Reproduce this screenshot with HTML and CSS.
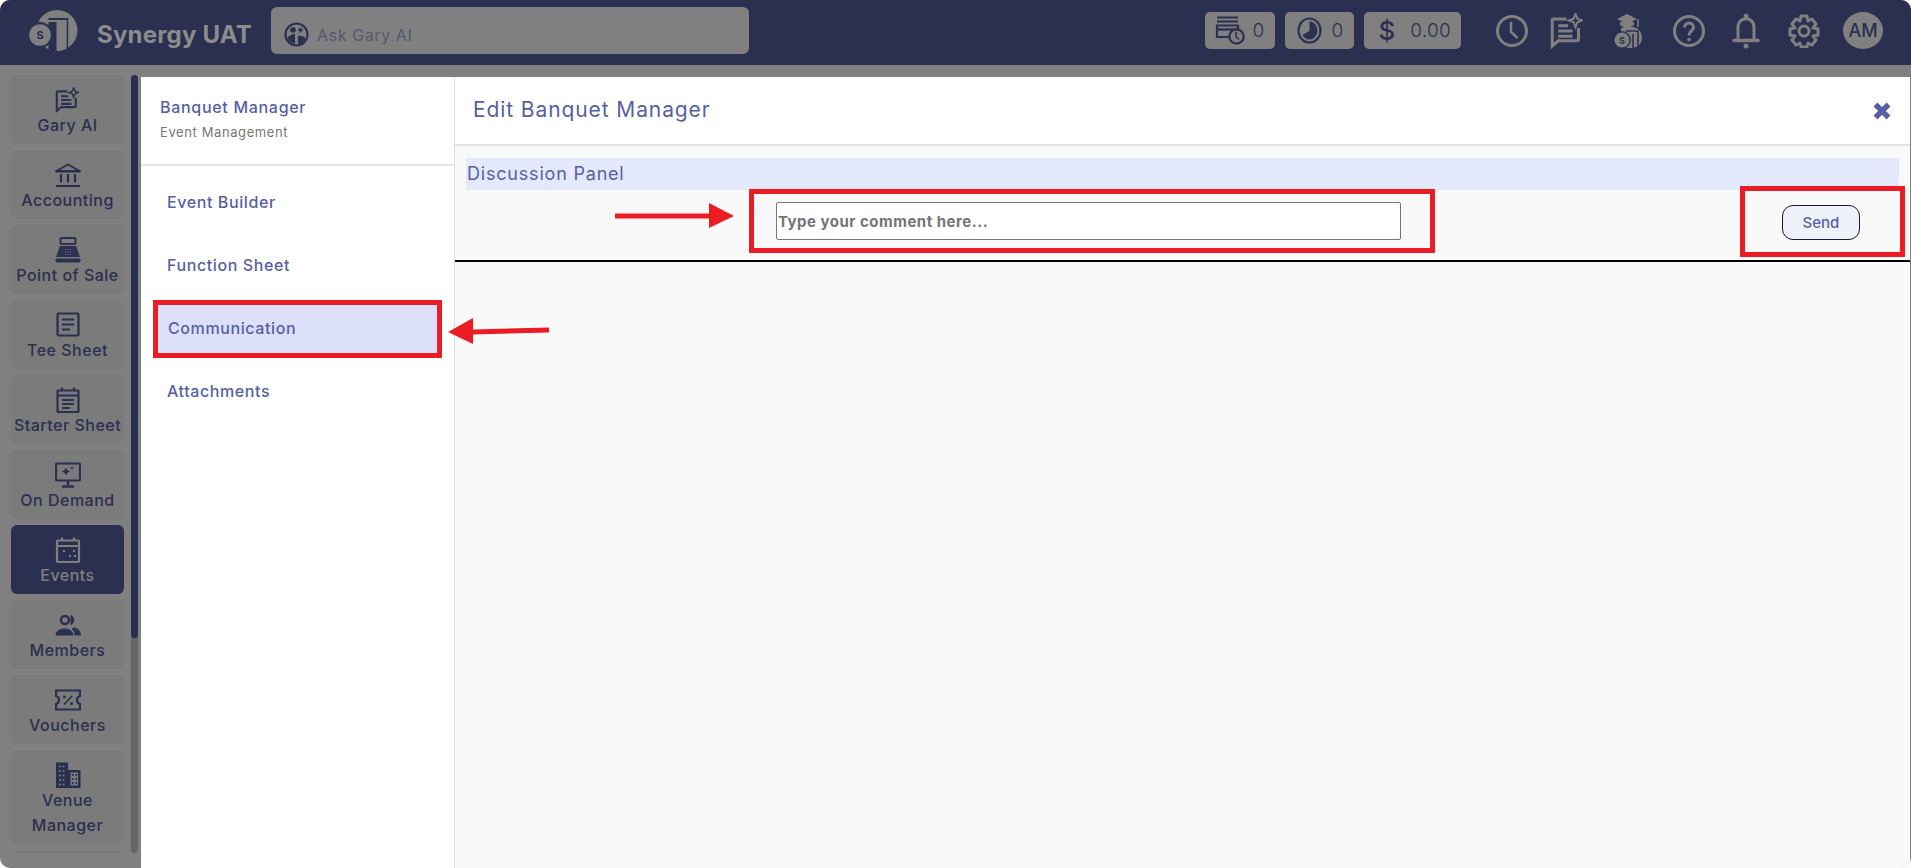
FILE: index.html
```html
<!DOCTYPE html>
<html lang="en">
<head>
    <meta charset="UTF-8">
    <title>Synergy UAT - Edit Banquet Manager</title>
    <link rel="stylesheet" href="styles.css">
</head>
<body>

<svg class="sprites" width="0" height="0">
    <symbol id="i-gary" viewBox="0 0 24 24">
        <path d="M13 4H4.500A1 1 0 0 0 3.500 5v17l4-3.500H20a1 1 0 0 0 1-1V10" fill="none" stroke="currentColor" stroke-width="2"/>
        <path d="M7.500 8.500H14M7.500 12H17M7.500 15.500H17" fill="none" stroke="currentColor" stroke-width="2"/>
        <path d="M19 0.500l1.200 3.300 3.300 1.200-3.300 1.200L19 9.500l-1.200-3.300-3.300-1.200 3.300-1.200z" fill="none" stroke="currentColor" stroke-width="1.300"/>
    </symbol>
</svg>

<div class="app">

    <!-- Top bar -->
    <header class="topbar">
        <svg class="logo" width="50" height="43" viewBox="0 0 50 43">
            <circle cx="29" cy="21.500" r="20.500" fill="#808080"/>
            <path d="M20 9H40.200V43H38.700V11H21z" fill="#2b2f50"/>
            <rect x="20.500" y="13" width="8" height="30" fill="#2b2f50"/>
            <circle cx="12" cy="26" r="13" fill="#2b2f50"/>
            <circle cx="12" cy="26" r="10.800" fill="#808080"/>
            <text x="12" y="30" class="logo-s">S</text>
        </svg>
        <span class="brand">Synergy UAT</span>
        <div class="search">
            <svg width="25" height="25" viewBox="0 0 25 25" fill="none" stroke="#2b2f50" stroke-width="2.200">
                <circle cx="12.500" cy="12.500" r="11"/>
                <circle cx="9" cy="8" r="2.800" fill="#2b2f50" stroke="none"/>
                <path d="M3.500 16.500c1-3 4-4.500 7.500-4.500v10c-3-.5-6-2.500-7.500-5.500z" fill="#2b2f50" stroke="none"/>
                <path d="M14 14c3-.5 6 .5 7.500 2.500-1 3-4 5.500-7.500 6z" fill="#2b2f50" stroke="none"/>
                <path d="M16.500 5.500v5M14 8h5" stroke-width="1.600"/>
            </svg>
            <span class="search-text">Ask Gary AI</span>
        </div>

        <div class="top-right">
            <div class="chip chip-one">
                <svg width="30" height="29" viewBox="0 0 30 29" fill="none" stroke="#2b2f50" stroke-width="2.200">
                    <path d="M2 1.500H23M2 5.500H23"/>
                    <path d="M14 21H2V9.500H23V13"/>
                    <path d="M2 13.500H23"/>
                    <circle cx="21.500" cy="20.500" r="7.200"/>
                    <path d="M21 16v5l3 2.500" stroke-width="1.600"/>
                </svg>
                <span>0</span>
            </div>
            <div class="chip chip-two">
                <svg width="25" height="27" viewBox="0 0 25 27" fill="none" stroke="#2b2f50" stroke-width="2.200">
                    <ellipse cx="12.500" cy="13.500" rx="11" ry="12"/>
                    <path d="M12.500 4.500a8 9 0 1 1-7 13.500l7-4z" fill="#2b2f50" stroke="none"/>
                </svg>
                <span>0</span>
            </div>
            <div class="chip chip-three">
                <span class="dollar">$</span>
                <span class="amount">0.00</span>
            </div>

            <div class="top-icons">
                <svg width="32" height="32" viewBox="0 0 32 32" fill="none" stroke="#808080" stroke-width="3">
                    <circle cx="16" cy="16" r="14.500"/>
                    <path d="M15 7v10l6.500 6" stroke-width="2.500"/>
                </svg>
                <svg class="top-gary" width="36" height="36"><use href="#i-gary"/></svg>
                <svg class="top-hat" width="32" height="36" viewBox="0 0 32 36" fill="none">
                    <path d="M15 1l10 5-10 5-10-5z" fill="#808080"/>
                    <path d="M8 9v3c4 3 10 3 14 0V9" fill="#808080"/>
                    <path d="M26 6v8" stroke="#808080" stroke-width="1.500"/>
                    <path d="M9 15c8-3 20-2 21 9 0 6-3 10-10 11H9z" fill="#808080"/>
                    <path d="M14 18H26V35M21 21V35" stroke="#2b2f50" stroke-width="1.600"/>
                    <circle cx="10" cy="27" r="9" fill="#2b2f50"/>
                    <circle cx="10" cy="27" r="7.500" fill="#808080"/>
                    <text x="10" y="30.500" class="hat-s">S</text>
                </svg>
                <svg class="top-help" width="32" height="32" viewBox="0 0 32 32" fill="none" stroke="#808080" stroke-width="3">
                    <circle cx="16" cy="16" r="14.500"/>
                    <path d="M11.500 12.500c0-6 9-6 9 0 0 3.500-4.500 3.500-4.500 8" />
                    <circle cx="16" cy="24.500" r="1.800" fill="#808080" stroke="none"/>
                </svg>
                <svg width="32" height="36" viewBox="0 0 32 36" fill="none" stroke="#808080" stroke-width="3">
                    <path d="M8 26V14c0-11 16-11 16 0v12"/>
                    <path d="M4 27.500H28" stroke-width="3.500" stroke-linecap="round"/>
                    <circle cx="16" cy="3" r="2.500" fill="#808080" stroke="none"/>
                    <circle cx="16" cy="33" r="2.500" fill="#808080" stroke="none"/>
                </svg>
                <svg width="32" height="34" viewBox="0 0 32 34" fill="none" stroke="#808080" stroke-width="3">
                    <path d="M13 2h6l1 5 4-2 4 5-3 4 5 1v6l-5 1 3 4-4 5-4-2-1 4h-6l-1-4-4 2-4-5 3-4-5-1v-6l5-1-3-4 4-5 4 2z" stroke-linejoin="round"/>
                    <circle cx="16" cy="17" r="5"/>
                </svg>
            </div>
            <div class="avatar">AM</div>
        </div>
    </header>

    <div class="main">

        <!-- Left navigation -->
        <aside class="sidebar">
            <nav class="side-list">
                <a class="side-item">
                    <svg class="side-gary" width="26" height="26"><use href="#i-gary"/></svg>
                    <span>Gary AI</span>
                </a>
                <a class="side-item">
                    <svg width="26" height="26" viewBox="0 0 26 26" fill="none" stroke="currentColor" stroke-width="2.200">
                        <path d="M1.500 9L13 2.500 24.500 9z" stroke-width="1.800"/>
                        <path d="M1 9.500H25M6 12v8.500M13 12v8.500M20 12v8.500M1 24H25"/>
                    </svg>
                    <span>Accounting</span>
                </a>
                <a class="side-item">
                    <svg width="26" height="26" viewBox="0 0 26 26" fill="none">
                        <rect x="5.500" y="1" width="15" height="6" rx="1.500" stroke="currentColor" stroke-width="2"/>
                        <path d="M5 9H21L25 20H1z" fill="currentColor"/>
                        <rect x="0.500" y="21.500" width="25" height="4" rx="1.500" fill="currentColor"/>
                        <path d="M10 12.500h7M10 15h7M10 17.500h7" stroke="#7b7b7b" stroke-width="1.200" stroke-dasharray="1.200 1.200"/>
                    </svg>
                    <span>Point of Sale</span>
                </a>
                <a class="side-item">
                    <svg width="26" height="26" viewBox="0 0 26 26" fill="none" stroke="currentColor" stroke-width="2.200">
                        <rect x="2.500" y="1.500" width="21" height="22" rx="1"/>
                        <path d="M7 7.500H19M7 12.500H19M7 17.500H15"/>
                    </svg>
                    <span>Tee Sheet</span>
                </a>
                <a class="side-item">
                    <svg width="26" height="26" viewBox="0 0 26 26" fill="none" stroke="currentColor" stroke-width="2.200">
                        <rect x="2.500" y="3.500" width="21" height="21.500" rx="1"/>
                        <path d="M7 0.500V4M19 0.500V4M2.500 8.500H23.500M7 13H19M7 17H19M7 21H15"/>
                    </svg>
                    <span>Starter Sheet</span>
                </a>
                <a class="side-item">
                    <svg width="26" height="26" viewBox="0 0 26 26" fill="none" stroke="currentColor" stroke-width="2.200">
                        <rect x="1" y="1.500" width="24" height="17" rx="1"/>
                        <path d="M13 19v4M7 24.500H19" stroke-width="2.600"/>
                        <path d="M11 6l1 2.500 2.500 1-2.500 1-1 2.500-1-2.500-2.500-1 2.500-1zM17 4.500v3M15.500 6h3" fill="currentColor" stroke="currentColor" stroke-width="0.800"/>
                    </svg>
                    <span>On Demand</span>
                </a>
                <a class="side-item side-item-active">
                    <svg width="26" height="26" viewBox="0 0 26 26" fill="none" stroke="currentColor" stroke-width="2.200">
                        <rect x="2" y="3.500" width="22" height="21.500" rx="1"/>
                        <path d="M7 0.500V4M19 0.500V4M2 9H24"/>
                        <path d="M8 14h2M14 19h2M19 19h2M18 14h2" stroke-width="2"/>
                    </svg>
                    <span>Events</span>
                </a>
                <a class="side-item">
                    <svg width="26" height="26" viewBox="0 0 26 26" fill="none" stroke="currentColor">
                        <circle cx="10" cy="8" r="4" stroke-width="2.400"/>
                        <path d="M16 3.500a5 5 0 0 1 0 9z" fill="currentColor"/>
                        <path d="M1 23c0-8 17-8 17 0z" fill="currentColor"/>
                        <path d="M19 16c3 0 6 2 6.500 7H20c0-3-1-5-3-6z" fill="currentColor"/>
                    </svg>
                    <span>Members</span>
                </a>
                <a class="side-item">
                    <svg width="26" height="26" viewBox="0 0 26 26" fill="none" stroke="currentColor" stroke-width="2.200">
                        <path d="M1 3.500H25V9c-4 1-4 7 0 8v5.500H1V17c4-1 4-7 0-8z"/>
                        <path d="M9 17.500L17 9" stroke-width="1.800"/>
                        <circle cx="9.500" cy="10" r="1.500" fill="currentColor" stroke="none"/>
                        <circle cx="16.500" cy="16.500" r="1.500" fill="currentColor" stroke="none"/>
                    </svg>
                    <span>Vouchers</span>
                </a>
                <a class="side-item side-item-tall">
                    <svg width="26" height="26" viewBox="0 0 26 26" fill="none">
                        <path d="M1 0.500H13V8H25.500V26H1z" fill="currentColor"/>
                        <path d="M15.500 10.500H23V23.500H15.500z" fill="#7b7b7b"/>
                        <path d="M17 13h1.500M20.500 13H22M17 17h1.500M20.500 17H22M17 21h1.500M20.500 21H22" stroke="currentColor" stroke-width="2"/>
                        <path d="M4 4.500h7M4 9h7M4 13.500h7M4 18h7M4 22.500h7" stroke="#7b7b7b" stroke-width="1.300" stroke-dasharray="2 1.500"/>
                    </svg>
                    <span>Venue Manager</span>
                </a>
                <a class="side-item"></a>
            </nav>
            <div class="side-track"><div class="side-thumb"></div></div>
        </aside>

        <!-- Edit dialog -->
        <section class="dialog">
            <div class="dialog-nav">
                <div class="dialog-nav-head">
                    <div class="nav-title">Banquet Manager</div>
                    <div class="nav-sub">Event Management</div>
                </div>
                <ul class="nav-menu">
                    <li class="nav-link">Event Builder</li>
                    <li class="nav-link">Function Sheet</li>
                    <li class="nav-link nav-link-active">Communication</li>
                    <li class="nav-link">Attachments</li>
                </ul>
            </div>

            <div class="dialog-body">
                <div class="dialog-head">
                    <h1>Edit Banquet Manager</h1>
                    <svg class="close-x" width="18" height="18" viewBox="0 0 18 18">
                        <path d="M2.500 2.500L15.500 15.500M15.500 2.500L2.500 15.500" stroke="#555fa5" stroke-width="5.500"/>
                    </svg>
                </div>
                <div class="panel">
                    <div class="panel-title">Discussion Panel</div>
                    <div class="comment-row">
                        <input class="comment-input" type="text" placeholder="Type your comment here...">
                        <button class="send-btn" type="button">Send</button>
                    </div>
                </div>
            </div>
        </section>
    </div>

    <!-- Annotations -->
    <div class="mark mark-nav"></div>
    <div class="mark mark-input"></div>
    <div class="mark mark-send"></div>
    <svg class="arrows" width="1911" height="868" viewBox="0 0 1911 868">
        <path d="M615 216H709" stroke="#ec1c24" stroke-width="5"/>
        <path d="M709 203L734 216L709 228z" fill="#ec1c24"/>
        <path d="M473 332L549 330" stroke="#ec1c24" stroke-width="5"/>
        <path d="M473 318L448 332L473 344z" fill="#ec1c24"/>
    </svg>
</div>

</body>
</html>
```

FILE: styles.css
```css
* {
    box-sizing: border-box;
}

html, body {
    margin: 0;
    padding: 0;
    background: #ffffff;
    overflow: hidden;
}

.sprites {
    position: absolute;
}

.app {
    position: relative;
    width: 1911px;
    height: 868px;
    display: flex;
    flex-direction: column;
    background: #808080;
    border-radius: 10px;
    overflow: hidden;
    font-family: 'Inter', 'Lato', sans-serif;
}

/* Top bar */
.topbar {
    height: 65px;
    flex-shrink: 0;
    display: flex;
    align-items: center;
    padding: 0 28px 4px;
    background: #2b2f50;
}

.logo-s {
    font-size: 11px;
    font-weight: 700;
    text-anchor: middle;
    fill: #2b2f50;
}

.hat-s {
    font-size: 9px;
    font-weight: 700;
    text-anchor: middle;
    fill: #2b2f50;
}

.brand {
    margin: 8px 0 0 19px;
    font-size: 24px;
    font-weight: 700;
    letter-spacing: 0.2px;
    color: #8c8c8c;
    white-space: nowrap;
}

.search {
    width: 478px;
    height: 47px;
    margin-left: 19px;
    padding: 8px 0 0 13px;
    display: flex;
    align-items: center;
    gap: 8px;
    background: #808080;
    border-radius: 6px;
}

.search-text {
    font-size: 16px;
    letter-spacing: 0.6px;
    color: #55586e;
}

.top-right {
    margin-left: auto;
    display: flex;
    align-items: center;
}

.chip {
    height: 37px;
    display: flex;
    align-items: center;
    margin-right: 10px;
    background: #808080;
    border-radius: 5px;
    color: #2b2f50;
    font-size: 19px;
    font-weight: 300;
}

.chip-one {
    width: 70px;
    padding-left: 10px;
    gap: 8px;
}

.chip-two {
    width: 69px;
    padding-left: 12px;
    gap: 10px;
}

.chip-three {
    width: 97px;
    margin-right: 0;
    padding-left: 15px;
    gap: 15px;
}

.dollar {
    font-size: 26px;
    font-weight: 500;
}

.amount {
    letter-spacing: 0.3px;
}

.top-icons {
    display: flex;
    align-items: center;
    gap: 26.5px;
    margin-left: 35px;
}

.top-gary {
    margin: 0 3px 0 -7px;
    color: #808080;
}

.top-hat {
    margin: 0 1px 0 -1px;
}

.top-help {
    margin: 0 -2px 0 2px;
}

.avatar {
    width: 40px;
    height: 37px;
    margin-left: 23px;
    display: flex;
    align-items: center;
    justify-content: center;
    border-radius: 50%;
    background: #808080;
    color: #2b2f50;
    font-size: 18px;
    font-weight: 500;
}

.main {
    flex: 1;
    display: flex;
    min-height: 0;
}

/* Left navigation */
.sidebar {
    width: 141px;
    flex-shrink: 0;
    display: flex;
    padding: 10px 3px 15px 11px;
}

.side-list {
    width: 113px;
    display: flex;
    flex-direction: column;
    gap: 6px;
    overflow: hidden;
}

.side-item {
    height: 69px;
    flex-shrink: 0;
    display: flex;
    flex-direction: column;
    align-items: center;
    padding-top: 12px;
    background: #7b7b7b;
    border-radius: 6px;
    color: #2b2f50;
    font-size: 16px;
    font-weight: 500;
    letter-spacing: 0.5px;
    line-height: 25px;
    text-align: center;
}

.side-item-tall {
    height: 94px;
}

.side-item-active {
    background: #2b2f50;
    color: #808080;
}

.side-gary {
    margin-right: 4px;
}

.side-track {
    width: 7px;
    margin-left: 7px;
    background: #666666;
    border-radius: 4px;
}

.side-thumb {
    height: 563px;
    background: #2b2f50;
    border-radius: 4px;
}

/* Edit dialog */
.dialog {
    flex: 1;
    display: flex;
    margin: 12px 1px 0 0;
    background: #ffffff;
}

.dialog-nav {
    width: 314px;
    flex-shrink: 0;
    border-right: 1px solid #dedede;
}

.dialog-nav-head {
    height: 89px;
    padding: 20px 19px 0;
    border-bottom: 2px solid #e4e4e4;
}

.nav-title {
    font-size: 16px;
    font-weight: 500;
    letter-spacing: 0.7px;
    line-height: 20px;
    color: #555fa5;
}

.nav-sub {
    margin-top: 6px;
    font-size: 13px;
    letter-spacing: 0.6px;
    line-height: 18px;
    color: #777777;
}

.nav-menu {
    list-style: none;
    margin: 12px 0 0;
    padding: 0 17px 0 16px;
}

.nav-link {
    height: 49px;
    margin-bottom: 14px;
    padding: 0 0 2px 10px;
    display: flex;
    align-items: center;
    font-size: 16px;
    font-weight: 500;
    letter-spacing: 0.6px;
    color: #555fa5;
}

.nav-link-active {
    padding-left: 11px;
    background: #dde0fb;
}

.dialog-body {
    flex: 1;
    display: flex;
    flex-direction: column;
}

.dialog-head {
    height: 69px;
    flex-shrink: 0;
    display: flex;
    align-items: center;
    justify-content: space-between;
    padding: 0 19px 0 18px;
    border-bottom: 2px solid #e4e4e4;
}

.dialog-head h1 {
    margin: 0 0 3px;
    font-size: 21px;
    font-weight: 400;
    letter-spacing: 0.9px;
    color: #555fa5;
}

.close-x {
    margin-top: 1px;
}

.panel {
    flex: 1;
    padding-top: 12px;
    background: #f9f9f9;
}

.panel-title {
    height: 32px;
    margin: 0 11px 0 11px;
    padding: 0 0 2px 1px;
    display: flex;
    align-items: center;
    background: #e4eafc;
    font-size: 18px;
    font-weight: 400;
    letter-spacing: 0.8px;
    color: #555fa5;
}

.comment-row {
    height: 72px;
    display: flex;
    align-items: flex-start;
    padding: 12px 50px 0 321px;
    border-bottom: 2px solid #000000;
}

.comment-input {
    width: 625px;
    height: 38px;
    padding: 0 1px;
    border: 1px solid #767676;
    border-radius: 2px;
    background: #ffffff;
    font-family: 'Inter', sans-serif;
    font-size: 15px;
    font-weight: 700;
    letter-spacing: 0.5px;
}

.comment-input::placeholder {
    color: #757575;
    opacity: 1;
}

.send-btn {
    width: 78px;
    height: 35px;
    margin: 3px 0 0 auto;
    border: 1px solid #1a1a30;
    border-radius: 11px;
    background: #eff1f8;
    font-family: 'Inter', sans-serif;
    font-size: 15px;
    font-weight: 500;
    color: #5560a8;
}

/* Annotations */
.mark {
    position: absolute;
    border: 5px solid #ec1c24;
}

.mark-nav {
    left: 153px;
    top: 300px;
    width: 289px;
    height: 58px;
}

.mark-input {
    left: 749px;
    top: 189px;
    width: 686px;
    height: 64px;
}

.mark-send {
    left: 1740px;
    top: 186px;
    width: 165px;
    height: 71px;
}

.arrows {
    position: absolute;
    left: 0;
    top: 0;
    pointer-events: none;
}
```
